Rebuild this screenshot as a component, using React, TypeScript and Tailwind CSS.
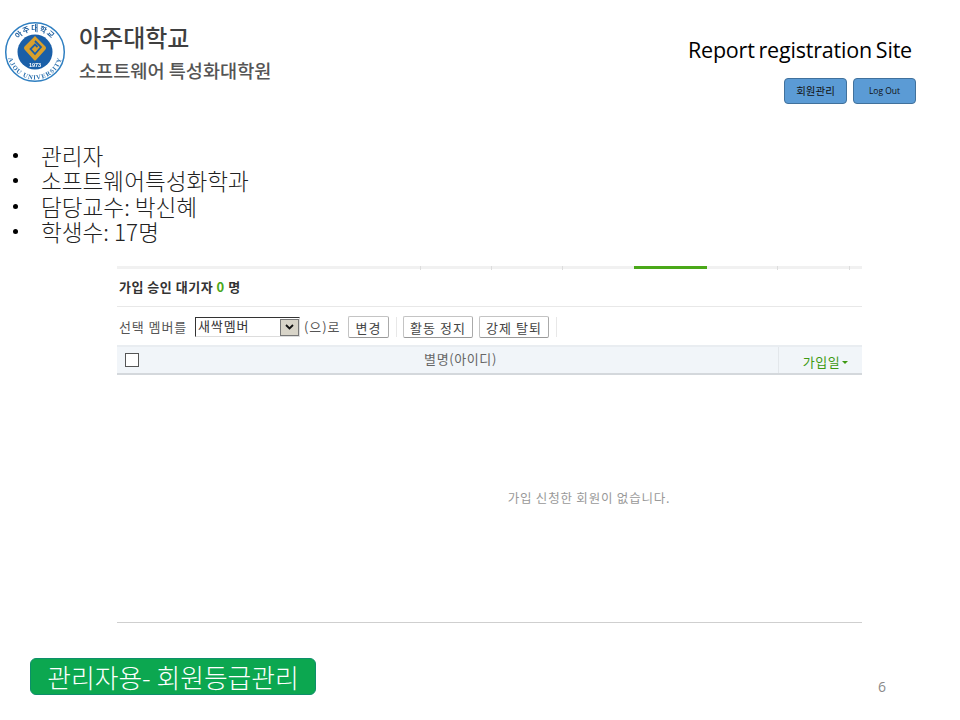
const KR = "font-['Noto_Sans_CJK_KR','Noto_Sans',sans-serif]";

function Logo() {
    return (
        <svg width="62" height="62" viewBox="0 0 62 62" className="shrink-0 blur-[0.4px]">
            <defs>
                <path id="ringTop" d="M 10 31 A 21 21 0 0 1 52 31" fill="none" />
                <path id="ringBottom" d="M 3.5 31 A 27.5 27.5 0 0 0 58.5 31" fill="none" />
            </defs>
            <circle cx="31" cy="31" r="29.3" fill="#fff" stroke="#2f7fc1" strokeWidth="1.5" />
            <circle cx="31" cy="31" r="17.5" fill="#1a5fa8" />
            <text fontSize="7.5" fontWeight="700" fill="#1f5f9f" fontFamily="Noto Sans CJK KR" letterSpacing="0.8">
                <textPath href="#ringTop" startOffset="50%" textAnchor="middle">아주대학교</textPath>
            </text>
            <text fontSize="6.5" fontWeight="700" fill="#2a6fae" fontFamily="Liberation Serif" letterSpacing="0.9">
                <textPath href="#ringBottom" startOffset="50%" textAnchor="middle">AJOU UNIVERSITY</textPath>
            </text>
            <path d="M31 15 L41 25 Q43 27 41 29 L32 39 Q31 40 30 39 L21 29 Q19 27 21 25 Z" fill="#d9a02c" />
            <path d="M31 20 L37 26 L31 33 L26.5 28 L31 23.5 L33.5 26" fill="none" stroke="#1a5fa8" strokeWidth="1.8" />
            <text x="31" y="45.5" textAnchor="middle" fontSize="5.5" fontWeight="700" fill="#fff" fontFamily="Liberation Sans">1973</text>
        </svg>
    );
}

function SmallBtn({ label, className = "" }: { label: string; className?: string }) {
    return (
        <button className={`h-[22px] bg-white border border-[#c4c4c4] border-b-[#999] border-r-[#aaa] rounded-[2px] text-[13px] leading-none tracking-[1px] text-[#444] ${className}`}>
            {label}
        </button>
    );
}

export default function App() {
    const info = ["관리자", "소프트웨어특성화학과", "담당교수: 박신혜", "학생수: 17명"];

    return (
        <div className={`w-[960px] h-[720px] bg-white overflow-hidden flex flex-col ${KR}`}>
            <header className="flex justify-between h-[112px]">
                <div className="flex pl-[4px] pt-[21px] gap-[13px]">
                    <Logo />
                    <div className="text-[#3f3f3f] pt-[1px]">
                        <div className="text-[24px] leading-[30px] font-medium">아주대학교</div>
                        <div className="text-[18.6px] leading-[24px] mt-[6px] text-[#555] font-medium">소프트웨어 특성화대학원</div>
                    </div>
                </div>
                <div className="flex flex-col items-end pr-[44px] pt-[36px]">
                    <div className="font-['Open_Sans',sans-serif] text-[21.5px] leading-[28px] text-black tracking-[-0.2px] [word-spacing:-1.5px] pr-[4px]">Report registration Site</div>
                    <div className="flex gap-[6px] mt-[14px]">
                        <button className="w-[63px] h-[26px] rounded-[4px] bg-[#5b9bd5] border border-[#41719c] text-[10.5px] leading-none text-[#111]">회원관리</button>
                        <button className="w-[63px] h-[26px] rounded-[4px] bg-[#5b9bd5] border border-[#41719c] text-[8.5px] leading-none text-[#111] font-['Open_Sans',sans-serif]">Log Out</button>
                    </div>
                </div>
            </header>

            <ul className="mt-[31px] pl-[13px] text-[22.6px] leading-[25.3px] text-[#222] font-light">
                {info.map((t) => (
                    <li key={t} className="flex items-center">
                        <span className="w-[5px] h-[5px] rounded-full bg-black mr-[23px]" />
                        <span>{t}</span>
                    </li>
                ))}
            </ul>

            <section className="ml-[117px] w-[745px] mt-[22px]">
                <div className="h-[3px] bg-[#f1f1f1] flex">
                    <div className="w-[304px] h-[4px] border-r border-[#ddd]" />
                    <div className="w-[71px] h-[4px] border-r border-[#ddd]" />
                    <div className="w-[71px] h-[4px] border-r border-[#ddd]" />
                    <div className="w-[71px]" />
                    <div className="w-[73px] bg-[#4aa818]" />
                    <div className="w-[71px] h-[4px] border-r border-[#ddd]" />
                    <div className="w-[72px] h-[4px] border-r border-[#ddd]" />
                </div>
                <div className="h-[38px] pb-[2px] border-b border-[#e8e8e8] flex items-center pl-[2px] text-[13px] font-bold text-[#333] tracking-[0.5px]">
                    <span>가입 승인 대기자 <span className="text-[#4aa818]">0</span> 명</span>
                </div>
                <div className="h-[38px] pt-[2px] flex items-center pl-[2px] text-[13px] text-[#555] tracking-[0.9px]">
                    <span className="w-[76px]">선택 멤버를</span>
                    <div className="w-[105px] h-[20px] border border-[#777] border-t-[#333] border-l-[#333] border-b-[#ddd] border-r-[#ddd] flex items-center justify-between pl-[2px] text-[#333]">
                        <span className="-mt-[2px]">새싹멤버</span>
                        <span className="w-[19px] h-[17px] bg-[#d8d4c8] border border-[#777] flex items-center justify-center">
                            <svg width="9" height="6" viewBox="0 0 9 6"><path d="M1 1 L4.5 4.5 L8 1" fill="none" stroke="#111" strokeWidth="1.8" /></svg>
                        </span>
                    </div>
                    <span className="ml-[4px] w-[35px] whitespace-nowrap">(으)로</span>
                    <SmallBtn label="변경" className="ml-[9px] w-[41px]" />
                    <span className="mx-[7px] w-px h-[20px] bg-[#e8e8e8]" />
                    <SmallBtn label="활동 정지" className="ml-[-1px] w-[70px]" />
                    <SmallBtn label="강제 탈퇴" className="ml-[6px] w-[70px]" />
                    <span className="ml-[7px] w-px h-[20px] bg-[#e8e8e8]" />
                </div>
                <div className="h-[30px] bg-[#f1f5f9] border-t-2 border-t-[#e9edf1] border-b-2 border-b-[#d4d8dc] flex items-center text-[13px] tracking-[0.6px]">
                    <div className="ml-[8px] w-[14px] h-[14px] border border-[#555] bg-white" />
                    <div className="flex-1 text-center text-[#666] -mt-[2px] pl-[4px]">별명(아이디)</div>
                    <div className="w-[84px] h-full border-l border-[#e3e7eb] flex items-center justify-center gap-[2px] text-[#3e9a12] pt-[4px] pl-[10px]">
                        <span>가입일</span>
                        <span className="w-0 h-0 border-l-[3px] border-r-[3px] border-t-[3px] border-l-transparent border-r-transparent border-t-[#3e9a12]" />
                    </div>
                </div>
                <div className="h-[248px] border-b border-[#cfcfcf] pt-[115px] text-center text-[12.5px] leading-[16px] tracking-[0.8px] text-[#999] pl-[199px]">
                    가입 신청한 회원이 없습니다.
                </div>
            </section>

            <footer className="flex justify-between items-start mt-[35px] pl-[30px] pr-[74px]">
                <div className="w-[286px] h-[37px] rounded-[6px] bg-[#0ca750] border border-[#0d8f6a] text-white text-[25.8px] leading-[35px] text-center whitespace-nowrap font-light">
                    관리자용- 회원등급관리
                </div>
                <span className="text-[14px] leading-[18px] text-[#8a8a8a] mt-[20px] font-['Open_Sans',sans-serif]">6</span>
            </footer>
        </div>
    );
}
